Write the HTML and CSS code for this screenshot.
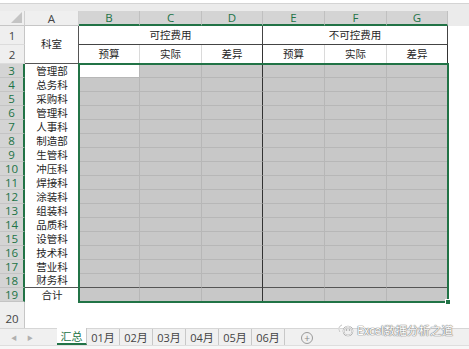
FILE: index.html
```html
<!DOCTYPE html>
<html lang="zh-CN">
<head>
    <meta charset="UTF-8">
    <meta name="viewport" content="width=device-width, initial-scale=1.0">
    <title>费用汇总</title>
    <link rel="stylesheet" href="styles.css">
</head>
<body>
    <div class="topbar"></div>
    <div class="topgap"></div>

    <div class="sheet" id="sheet">
        <!-- column headers -->
        <div class="hd corner"><span class="tri"></span></div>
        <div class="hd">A</div>
        <div class="hd sel">B</div>
        <div class="hd sel">C</div>
        <div class="hd sel">D</div>
        <div class="hd sel">E</div>
        <div class="hd sel">F</div>
        <div class="hd sel">G</div>
        <div class="hd rest"></div>

        <!-- row 1 -->
        <div class="rh">1</div>
        <div class="c a1">科室</div>
        <div class="c grp">可控费用</div>
        <div class="c grp">不可控费用</div>
        <div class="c blank"></div>

        <!-- row 2 -->
        <div class="rh">2</div>
        <div class="c sub">预算</div>
        <div class="c sub">实际</div>
        <div class="c sub split">差异</div>
        <div class="c sub">预算</div>
        <div class="c sub">实际</div>
        <div class="c sub split">差异</div>
        <div class="c blank"></div>

        <!-- row 20 -->
        <div class="rh row20">20</div>
        <div class="c blank wide"></div>

        <div class="selection"></div>
    </div>

    <div class="tabs">
        <div class="nav"><span>&#9664;</span><span>&#9654;</span></div>
        <div class="tab active">汇总</div>
        <div class="tab">01月</div>
        <div class="tab">02月</div>
        <div class="tab">03月</div>
        <div class="tab">04月</div>
        <div class="tab">05月</div>
        <div class="tab">06月</div>
        <div class="add">+</div>
    </div>
    <div class="statusbar"></div>

    <div class="watermark">
        <svg width="18" height="14" viewBox="0 0 18 14">
            <path d="M3 9 C1 6 2 3 5 2" fill="none" stroke="#fff" stroke-width="1.6"/>
            <path d="M3 9 C1 6 2 3 5 2" fill="none" stroke="#999" stroke-width="0.6"/>
            <circle cx="11" cy="8" r="4.5" fill="none" stroke="#999" stroke-width="1.6"/>
            <circle cx="11" cy="8" r="4.5" fill="none" stroke="#fff" stroke-width="0.8"/>
            <circle cx="9.5" cy="7" r="0.8" fill="#999"/>
            <circle cx="12.5" cy="7" r="0.8" fill="#999"/>
        </svg>
        <span>Excel数据分析之道</span>
    </div>

    <script>
        const sheet = document.getElementById('sheet');
        const marker = document.querySelector('.row20');
        const depts = ['管理部', '总务科', '采购科', '管理科', '人事科', '制造部', '生管科', '冲压科',
            '焊接科', '涂装科', '组装科', '品质科', '设管科', '技术科', '营业科', '财务科', '合计'];

        depts.forEach((name, i) => {
            const row = i + 3;
            const last = row === 18 ? ' r18' : '';
            let html = `<div class="rh sel${last}">${row}</div>`;
            html += `<div class="c dept${last}">${name}</div>`;
            for (let col = 0; col < 6; col++) {
                let cls = 'c g' + last;
                if (col === 2) cls += ' split';
                if (row === 3 && col === 0) cls += ' active';
                html += `<div class="${cls}"></div>`;
            }
            html += '<div class="c blank"></div>';
            marker.insertAdjacentHTML('beforebegin', html);
        });
    </script>
</body>
</html>
```

FILE: styles.css
```css
body {
    margin: 0;
    width: 469px;
    height: 349px;
    overflow: hidden;
    background: #fff;
    font-family: "Noto Sans CJK SC", sans-serif;
    position: relative;
}

.topbar {
    height: 3px;
    background: #fff;
    border-bottom: 1px solid #d4d4d4;
}

.topgap {
    height: 7px;
    background: #ebebeb;
}

.sheet {
    display: grid;
    grid-template-columns: 25px 54px 61px 62px 61px 62px 62px 61px 1fr;
    grid-template-rows: 15px 19px 19px repeat(17, 14px) 26px;
    position: relative;
}

.sheet > div {
    box-sizing: border-box;
}

.c {
    display: flex;
    align-items: center;
    justify-content: center;
    font-size: 10.5px;
    color: #262626;
    line-height: 1;
}

/* headers */
.hd {
    background: #efefef;
    border-right: 1px solid #d0d0d0;
    border-bottom: 1px solid #c6c6c6;
    display: flex;
    align-items: center;
    justify-content: center;
    font-family: "Open Sans", sans-serif;
    font-size: 11.5px;
    color: #444;
}

.hd.sel {
    background: #d4d4d4;
    color: #217346;
    border-right-color: #c0c0c0;
    border-bottom: 2px solid #217346;
}

.hd.rest {
    border-right: none;
    border-bottom: none;
    background: #ebebeb;
}

.corner {
    position: relative;
}

.tri {
    position: absolute;
    right: 2px;
    bottom: 2px;
    width: 0;
    height: 0;
    border-left: 11px solid transparent;
    border-bottom: 11px solid #c4c4c4;
}

.rh {
    background: #efefef;
    border-right: 1px solid #c6c6c6;
    border-bottom: 1px solid #dcdcdc;
    display: flex;
    align-items: center;
    justify-content: center;
    font-family: "Open Sans", sans-serif;
    font-size: 11.5px;
    color: #444;
}

.rh.sel {
    background: #d4d4d4;
    color: #217346;
    border-right: 2px solid #217346;
    border-bottom-color: #c4c4c4;
}

.rh.row20 {
    padding-top: 6px;
    border-bottom: none;
}

/* top table header */
.a1 {
    grid-row: span 2;
    border-right: 1px solid #555;
    border-bottom: 1px solid #555;
}

.grp {
    grid-column: span 3;
    border-right: 1px solid #444;
    border-bottom: 1px solid #444;
}

.sub {
    border-right: 1px solid #dadada;
    border-bottom: 1px solid #444;
}

.sub.split,
.g.split {
    border-right: 1px solid #333;
}

.blank {
    background: #fff;
}

.wide {
    grid-column: span 8;
}

/* body */
.dept {
    background: #fff;
}

.g {
    background: #c8c8c8;
    border-right: 1px solid #b7b7b7;
    border-bottom: 1px solid #b7b7b7;
}

.g.active {
    background: #fff;
}

.r18.dept,
.r18.g {
    border-bottom: 1px solid #555;
}

.selection {
    position: absolute;
    grid-row: 4 / 21;
    grid-column: 3 / 9;
    top: -1px;
    left: -1px;
    right: -1px;
    bottom: -1px;
    border: 2px solid #217346;
    pointer-events: none;
}

.selection::after {
    content: "";
    position: absolute;
    right: -4px;
    bottom: -4px;
    width: 4px;
    height: 4px;
    background: #217346;
    border: 1px solid #fff;
}

/* sheet tabs */
.tabs {
    display: flex;
    height: 17px;
    box-sizing: border-box;
    background: #f0f0f0;
    border-top: 1px solid #d6d6d6;
    font-family: "Open Sans", "Noto Sans CJK SC", sans-serif;
    font-size: 11px;
    color: #444;
}

.nav {
    width: 57px;
    display: flex;
    align-items: center;
    padding-left: 11px;
    gap: 10px;
    box-sizing: border-box;
    font-size: 6px;
    color: #b0b0b0;
}

.tab {
    width: 33px;
    display: flex;
    align-items: center;
    justify-content: center;
    border-right: 1px solid #c8c8c8;
    box-sizing: border-box;
}

.tab.active {
    width: 30px;
    background: #fff;
    color: #217346;
    border-bottom: 2px solid #217346;
    margin-top: -1px;
}

.add {
    margin-left: 16px;
    margin-top: 3px;
    width: 10px;
    height: 10px;
    border: 1px solid #9a9a9a;
    border-radius: 50%;
    display: flex;
    align-items: center;
    justify-content: center;
    font-size: 10px;
    line-height: 1;
    color: #8a8a8a;
}

.statusbar {
    height: 4px;
    background: #f7f7f7;
    border-top: 1px solid #dedede;
}

.watermark {
    position: absolute;
    left: 337px;
    top: 322px;
    display: flex;
    align-items: center;
    gap: 2px;
    font-family: "Noto Sans CJK SC", sans-serif;
    font-size: 11.5px;
    color: #fff;
    text-shadow: 0 0 1px #777, 0 0 1px #777, 0 0 1px #888;
}
```
